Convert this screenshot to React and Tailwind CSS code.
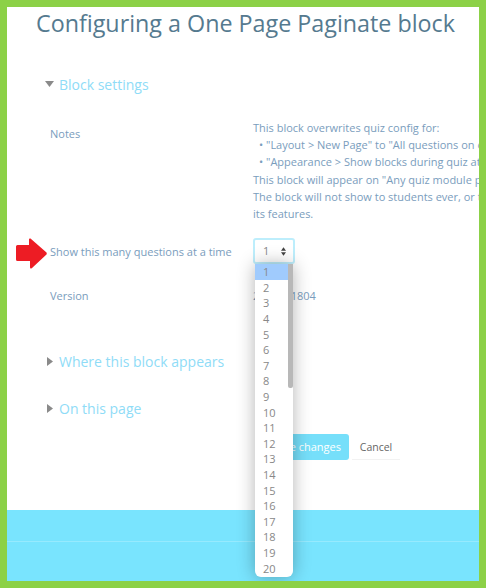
import React from 'react';

const options = Array.from({ length: 20 }, (_, i) => i + 1);

function SectionHead({ label, open }) {
  return (
    <div className="flex items-center h-[24px]">
      {open ? (
        <svg width="9" height="6" viewBox="0 0 9 6" className="ml-[38px] mr-[5px]"><path d="M0 0h9L4.500 6z" fill="#8a8a8a" /></svg>
      ) : (
        <svg width="6" height="9" viewBox="0 0 6 9" className="ml-[40px] mr-[6px]"><path d="M0 0l6 4.500L0 9z" fill="#8a8a8a" /></svg>
      )}
      <span className="text-[14px] text-[#8fdcf7]">{label}</span>
    </div>
  );
}

function Arrow() {
  return (
    <svg width="31" height="31" viewBox="0 0 31 31" className="absolute left-[9px] top-[0px]">
      <path d="M1.500 7H13V1.500Q13 0 14.500 0.500L30.500 14.500Q31 15.500 30.500 16.500L16 30Q14 31.500 14 29V23H1.500Q0 23 0 21.500V8.500Q0 7 1.500 7z" fill="#ed1c24" />
    </svg>
  );
}

export default function App() {
  return (
    <div className="w-[486px] h-[588px] border-[7px] border-[#8cd147] bg-white flex flex-col overflow-hidden font-['Open_Sans',sans-serif]">
      <div className="relative flex-1 flex flex-col">
        <h1 className="text-[23.300px] leading-[34px] text-[#557a8f] pl-[29px] whitespace-nowrap mt-[-1px]">Configuring a One Page Paginate block</h1>

        <div className="mt-[32px]"><SectionHead label="Block settings" open /></div>

        <div className="flex mt-[23px] text-[11px] leading-[17.200px] text-[#7a9dbd]">
          <div className="w-[246px] shrink-0 pl-[43px] pt-[6px]">Notes</div>
          <div className="whitespace-nowrap">
            <div>This block overwrites quiz config for:</div>
            <div className="pl-[6px]">• "Layout &gt; New Page" to "All questions on one page"</div>
            <div className="pl-[6px]">• "Appearance &gt; Show blocks during quiz attempts"</div>
            <div>This block will appear on "Any quiz module page"</div>
            <div>The block will not show to students ever, or take</div>
            <div>its features.</div>
          </div>
        </div>

        <div className="relative flex items-center mt-[16px] h-[26px] text-[11px] text-[#7a9dbd]">
          <Arrow />
          <div className="w-[246px] shrink-0 pl-[43px] pt-[3px]">Show this many questions at a time</div>
          <div className="w-[42px] h-[26px] border-2 border-[#bdeefc] rounded-[3px] flex items-center justify-between pl-[8px] pr-[7px] text-[#888]">
            <span>1</span>
            <svg width="5" height="9" viewBox="0 0 6 10"><path d="M3 0l3 4H0zM3 10l3-4H0z" fill="#444" /></svg>
          </div>
          <div className="absolute left-[248px] top-[26px] w-[38px] h-[313px] bg-white rounded-b-[6px] shadow-[0_0_18px_rgba(0,0,0,0.3)] z-10 overflow-hidden text-[11px] text-[#888]">
            {options.map((n) => (
              <div key={n} className={`h-[15.600px] leading-[15.600px] pl-[8px] ${n === 1 ? 'bg-[#a0cbfd]' : ''}`}>{n}</div>
            ))}
            <div className="absolute right-0 top-0 w-[5px] h-[124px] bg-[#b8b8b8] rounded-b-[2px]" />
          </div>
        </div>

        <div className="flex mt-[23px] h-[17px] leading-[17px] text-[11px] text-[#7a9dbd]">
          <div className="w-[246px] shrink-0 pl-[43px]">Version</div>
          <div>2018011804</div>
        </div>

        <div className="mt-[45px]"><SectionHead label="Where this block appears" /></div>
        <div className="mt-[23px]"><SectionHead label="On this page" /></div>

        <div className="flex items-center mt-[14px] pl-[258px] text-[11px]">
          <button className="h-[26px] w-[84px] rounded-[3px] bg-[#76dffa] text-white text-right pr-[8px]">Save changes</button>
          <span className="ml-[3px] w-[48px] h-[26px] leading-[26px] text-center text-[#666] text-[10.500px] border-b border-[#f2f2f2]">Cancel</span>
        </div>
      </div>
      <div className="h-[71px] shrink-0 bg-[#79e4fe] flex flex-col">
        <div className="h-[31px] border-b border-[#96eafe] box-content" />
      </div>
    </div>
  );
}
